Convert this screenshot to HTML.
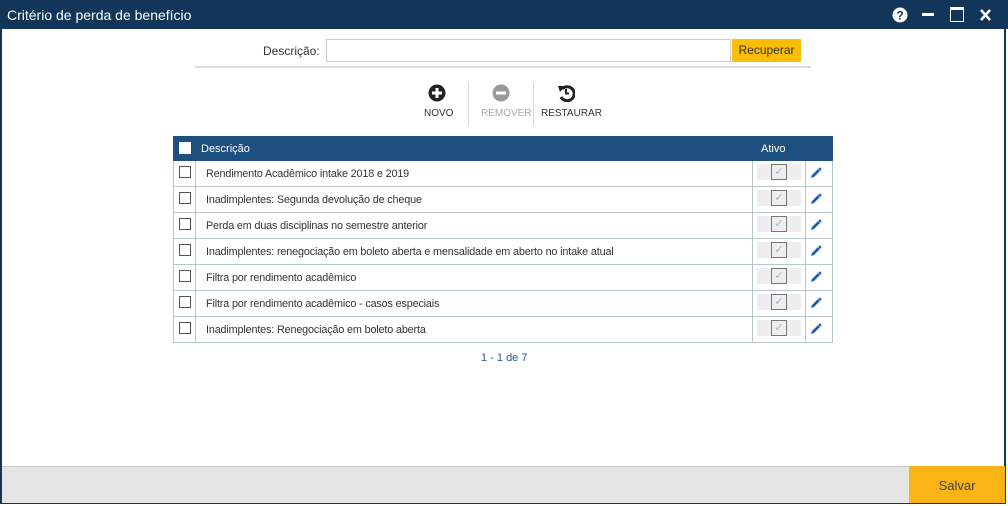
<!DOCTYPE html><html><head><meta charset="utf-8"><style>
*{box-sizing:border-box;margin:0;padding:0}
body{width:1008px;height:506px;overflow:hidden;background:#fff;font-family:"Liberation Sans",sans-serif;position:relative}
.a{position:absolute}
.frame{left:0;top:0;width:1006px;height:504px;border:2px solid #12365a;border-top:none}
.title{left:0;top:0;width:1008px;height:29px;background:#12365a;color:#fff;font-size:14px;line-height:30px;padding-left:7px}
.row{left:173px;width:660px;height:26px;border:1px solid #b8c6cc;border-top:none;font-size:10.8px;color:#333}
.cb{width:12px;height:12px;border:1px solid #555;background:#fff}
</style></head><body>
<div class="a frame"></div>
<div class="a title">Critério de perda de benefício</div>
<svg class="a" style="left:892px;top:7px" width="16" height="16"><circle cx="8" cy="8" r="7.5" fill="#fff"/><text x="8" y="12.5" font-size="12" font-weight="bold" text-anchor="middle" fill="#12365a" font-family="Liberation Sans">?</text></svg>
<div class="a" style="left:922px;top:13px;width:12px;height:3px;background:#fff"></div>
<div class="a" style="left:950px;top:7px;width:14px;height:15px;border:1.5px solid #fff;border-top-width:3px"></div>
<svg class="a" style="left:980px;top:9px" width="11" height="12"><path d="M1 1 L10 11 M10 1 L1 11" stroke="#fff" stroke-width="2.5"/></svg>
<div class="a" style="left:263px;top:44px;font-size:12px;color:#333">Descrição:</div>
<div class="a" style="left:326px;top:39px;width:405px;height:23px;border:1px solid #ccc"></div>
<div class="a" style="left:732px;top:39px;width:69px;height:23px;background:#fbbd08;font-size:12px;color:#333;text-align:center;line-height:23px">Recuperar</div>
<div class="a" style="left:195px;top:66px;width:616px;height:2px;background:#ddd"></div>
<svg class="a" style="left:428px;top:84px" width="18" height="18"><circle cx="9" cy="9" r="8.5" fill="#222"/><rect x="4" y="7.5" width="10" height="3" fill="#fff"/><rect x="7.5" y="4" width="3" height="10" fill="#fff"/></svg>
<div class="a" style="left:424px;top:108px;font-size:10px;color:#333">NOVO</div>
<div class="a" style="left:468px;top:82px;width:1px;height:44px;background:#ddd"></div>
<svg class="a" style="left:492px;top:84px" width="18" height="18"><circle cx="9" cy="9" r="8.5" fill="#9a9a9a"/><rect x="4" y="7.5" width="10" height="3" fill="#fff"/></svg>
<div class="a" style="left:481px;top:108px;font-size:10px;color:#aaa">REMOVER</div>
<div class="a" style="left:533px;top:82px;width:1px;height:44px;background:#ddd"></div>
<svg class="a" style="left:557px;top:84px" width="18" height="18"><path d="M5 5 A7 7 0 1 1 4 13" fill="none" stroke="#222" stroke-width="3"/><path d="M1 2 L8 2 L3 8Z" fill="#222"/><path d="M9 5 V9.5 H12" fill="none" stroke="#222" stroke-width="2"/></svg>
<div class="a" style="left:541px;top:108px;font-size:10px;color:#333">RESTAURAR</div>
<div class="a" style="left:173px;top:136px;width:660px;height:25px;background:#1d4f80;color:#fff;font-size:11px;line-height:26px">
<div class="a cb" style="left:6px;top:6px;border-color:#fff"></div>
<span class="a" style="left:28px">Descrição</span><span class="a" style="left:588px">Ativo</span></div>
<div id="rows"></div>
<div class="a" style="left:481px;top:352px;font-size:11px;color:#2a5a8a">1 - 1 de 7</div>
<div class="a" style="left:2px;top:466px;width:907px;height:37px;background:#e4e4e4;border-top:1px solid #ccc"></div>
<div class="a" style="left:909px;top:466px;width:96px;height:37px;background:#fbb415;font-size:13px;color:#444;text-align:center;line-height:40px">Salvar</div>
<script>
var t=["Rendimento Acadêmico intake 2018 e 2019","Inadimplentes: Segunda devolução de cheque","Perda em duas disciplinas no semestre anterior","Inadimplentes: renegociação em boleto aberta e mensalidade em aberto no intake atual","Filtra por rendimento acadêmico","Filtra por rendimento acadêmico - casos especiais","Inadimplentes: Renegociação em boleto aberta"],h="";
t.forEach(function(s,i){var y=161+i*26;h+='<div class="a row" style="top:'+y+'px"><div class="a cb" style="left:5px;top:5px"></div><div class="a" style="left:21px;top:0;width:1px;height:25px;background:#b8c6cc"></div><div class="a" style="left:32px;top:7px;letter-spacing:-0.15px">'+s+'</div><div class="a" style="left:578px;top:0;width:1px;height:25px;background:#b8c6cc"></div><div class="a" style="left:583px;top:3px;width:44px;height:16px;background:#eee"></div><div class="a" style="left:597px;top:3px;width:16px;height:16px;border:1px solid #777;color:#9bb;font-size:11px;text-align:center;line-height:14px">✓</div><div class="a" style="left:631px;top:0;width:1px;height:25px;background:#b8c6cc"></div><svg class="a" style="left:636px;top:6px" width="12" height="12"><path d="M1 11 L2 8 L8 2 L10 4 L4 10Z" fill="#1a5fb0"/><path d="M9 1 L11 3" stroke="#1a5fb0" stroke-width="2"/></svg></div>'});
document.getElementById("rows").innerHTML=h;
</script>
</body></html>
